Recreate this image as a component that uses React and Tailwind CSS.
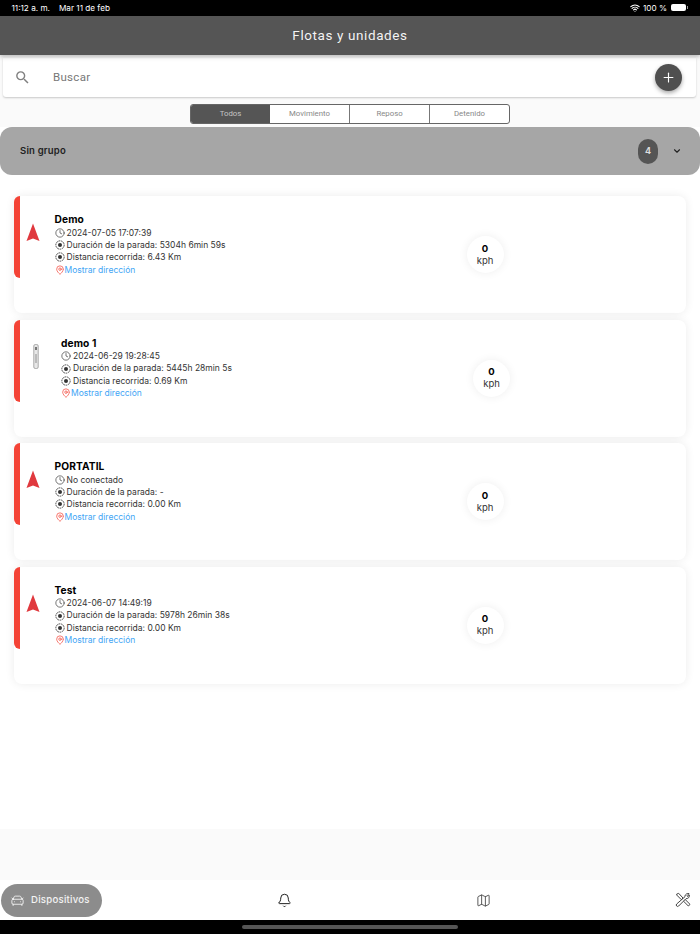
import { Plus, ChevronDown, Clock, MapPin, Bell, Map, CarFront, Wifi } from "lucide-react";

const units = [
    { name: 'Demo', date: '2024-07-05 17:07:39', stop: '5304h 6min 59s', dist: '6.43 Km' },
    { name: 'demo 1', date: '2024-06-29 19:28:45', stop: '5445h 28min 5s', dist: '0.69 Km', pen: true },
    { name: 'PORTATIL', date: 'No conectado', stop: '-', dist: '0.00 Km' },
    { name: 'Test', date: '2024-06-07 14:49:19', stop: '5978h 26min 38s', dist: '0.00 Km' },
]

function TargetIcon(){
    return (
        <svg width="10" height="10" viewBox="0 0 12 12" fill="none" className="shrink-0">
            <circle cx="6" cy="6" r="5" stroke="#333" strokeWidth="1" strokeDasharray="2.2 0.8"/>
            <circle cx="6" cy="6" r="2.4" fill="#333"/>
        </svg>
    )
}

function Arrow(){
    return (
        <svg width="14" height="19" viewBox="0 0 14 19">
            <path d="M7 0.5 L13.5 18 L7 15.5 L0.5 18 Z" fill="#e0393e"/>
        </svg>
    )
}

function Pen(){
    return (
        <svg width="6" height="25" viewBox="0 0 6 25">
            <rect x="0.8" y="0.5" width="4.4" height="24" rx="1.5" fill="#e8e8e8" stroke="#a0a0a0" strokeWidth="0.9"/>
            <rect x="2" y="3" width="2" height="3" fill="#777"/>
            <rect x="2" y="10" width="2" height="9" fill="#bbb"/>
        </svg>
    )
}

function UnitCard({ unit }){
    return (
        <div className="relative h-[117px] bg-white rounded-lg shadow-[0_0_10px_rgba(0,0,0,0.08)] flex">
            <div className="w-[6px] h-[82px] bg-[#f44336] rounded-l-lg shrink-0"/>
            <div className={unit.pen ? 'w-[41px] shrink-0 pl-[13px] pt-[24px]' : 'w-[34.5px] shrink-0 pl-[5.5px] pt-[27px]'}>
                {unit.pen ? <Pen/> : <Arrow/>}
            </div>
            <div className="w-[412px] shrink-0 pt-[17px]">
                <div className="text-[10.2px] leading-[13px] font-bold text-black h-[13px] tracking-[0.1px]">{unit.name}</div>
                <div className="text-[8.5px] leading-[12.4px] text-[#333] mt-[0.5px]">
                    <div className="flex items-center gap-[2px] h-[12.4px]"><Clock size={10} strokeWidth={1.6}/>{unit.date}</div>
                    <div className="flex items-center gap-[2px] h-[12.4px]"><TargetIcon/>Duración de la parada: {unit.stop}</div>
                    <div className="flex items-center gap-[2px] h-[12.4px]"><TargetIcon/>Distancia recorrida: {unit.dist}</div>
                    <div className="flex items-center h-[12.4px] text-[#42a5f5]">
                        <MapPin size={10} strokeWidth={1.7} className="text-[#f44336]"/>Mostrar dirección
                    </div>
                </div>
            </div>
            <div className="mt-[40px] w-[37px] h-[37px] rounded-full bg-white shadow-[0_0_10px_rgba(0,0,0,0.07)] flex flex-col items-center justify-center text-[9.5px] leading-[12px]">
                <span className="font-bold text-black">0</span>
                <span className="text-[#333]">kph</span>
            </div>
        </div>
    )
}

export default function App(){
    return (
        <div className="w-[700px] h-[934px] bg-white flex flex-col overflow-hidden font-['Inter',sans-serif]">
            {/* status bar */}
            <div className="h-[16px] bg-black text-white text-[8.2px] flex items-center justify-between pl-[11.5px] pr-[12px] shrink-0">
                <div className="flex gap-[9px]"><span>11:12 a. m.</span><span>Mar 11 de feb</span></div>
                <div className="flex items-center gap-[3px]">
                    <Wifi size={10} strokeWidth={2.6}/>
                    <span className="mr-[1px]">100 %</span>
                    <div className="w-[15px] h-[7px] bg-white rounded-[2px]"/>
                    <div className="w-[1px] h-[3px] bg-white/60 -ml-[2px]"/>
                </div>
            </div>

            {/* header */}
            <div className="h-[39px] bg-[#555555] shrink-0 flex items-center justify-center text-white/95 text-[13.5px] tracking-[0.6px] font-['Roboto',sans-serif] shadow-[0_2px_4px_rgba(0,0,0,0.25)] z-10">
                Flotas y unidades
            </div>

            <div className="bg-[#fafafa] h-[72px] shrink-0 flex flex-col">
                {/* search */}
                <div className="ml-[3px] mr-[4px] mt-[3px] h-[39px] bg-white rounded-b-[3px] shadow-[0_1px_2px_rgba(0,0,0,0.2)] flex items-center pl-[11px] pr-[14px] shrink-0">
                    <svg width="17" height="17" viewBox="0 0 24 24" fill="#808080">
                        <path d="M15.5 14h-.79l-.28-.27A6.471 6.471 0 0 0 16 9.5 6.5 6.5 0 1 0 9.5 16c1.61 0 3.09-.59 4.23-1.57l.27.28v.79l5 4.99L20.49 19l-4.99-5zm-6 0C7.01 14 5 11.99 5 9.5S7.01 5 9.5 5 14 7.01 14 9.5 11.99 14 9.5 14z"/>
                    </svg>
                    <span className="ml-[22px] text-[11.5px] text-[#777] font-['Roboto',sans-serif] tracking-[0.3px] flex-1">Buscar</span>
                    <div className="w-[27px] h-[27px] rounded-full bg-[#4f4f4f] shadow-[0_2px_4px_rgba(0,0,0,0.35)] flex items-center justify-center">
                        <Plus size={15} strokeWidth={1.8} className="text-white"/>
                    </div>
                </div>
                {/* segmented */}
                <div className="mx-auto mt-[7px] w-[320px] h-[20px] flex border border-[#666] rounded-[3px] text-[7.8px] font-normal text-[#888] font-['Roboto',sans-serif] bg-white overflow-hidden shrink-0">
                    <div className="flex-1 flex items-center justify-center bg-[#555555] text-[#c4c4c4]">Todos</div>
                    <div className="flex-1 flex items-center justify-center border-r border-[#777]">Movimiento</div>
                    <div className="flex-1 flex items-center justify-center border-r border-[#777]">Reposo</div>
                    <div className="flex-1 flex items-center justify-center">Detenido</div>
                </div>
            </div>

            {/* group header */}
            <div className="h-[48px] bg-[#a6a6a6] rounded-[12px] flex items-center pl-[20px] pr-[18px] shrink-0">
                <span className="flex-1 text-[9.5px] font-semibold text-[#222] tracking-[0.2px]">Sin grupo</span>
                <div className="w-[20px] h-[25px] rounded-full bg-[#555555] text-[#ddd] text-[9px] font-bold flex items-center justify-center">4</div>
                <ChevronDown size={10} strokeWidth={2.6} className="ml-[14px] text-[#222]"/>
            </div>

            {/* list */}
            <div className="h-[654px] shrink-0 bg-white pt-[21px] px-[14px] flex flex-col gap-[6.5px]">
                {units.map(u => <UnitCard key={u.name} unit={u}/>)}
            </div>

            <div className="h-[51px] bg-[#fafafa] shrink-0"/>

            {/* tab bar */}
            <div className="h-[40px] bg-white shrink-0 flex items-center pl-[1px] pr-[9px]">
                <div className="w-[101px] h-[33px] rounded-full bg-[#8c8c8c] flex items-center pl-[9px] text-white/90 text-[9.6px] font-medium tracking-[0.25px]">
                    <CarFront size={15} strokeWidth={1.4}/>
                    <span className="ml-[6px]">Dispositivos</span>
                </div>
                <Bell size={15} strokeWidth={1.6} className="ml-[175px] text-[#222]"/>
                <Map size={15} strokeWidth={1.4} className="ml-[184px] text-[#444]"/>
                <svg width="16" height="16" viewBox="0 0 24 24" fill="none" stroke="#444" strokeWidth="1.5" strokeLinejoin="round" strokeLinecap="round" className="ml-[184px]">
                    <path d="M3 3 L5.5 2 L12 9 L9.5 11.5 L3 5 Z"/>
                    <path d="M13 14 L19.5 20.5 a2 2 0 0 0 2.5 -2.5 L15.5 11.5"/>
                    <path d="M15 5.5 a4.5 4.5 0 0 1 6 -3 L18 5.5 L19 7 L21.5 4.5 a4.5 4.5 0 0 1 -5 5.5 L5.5 21 a2 2 0 0 1 -3 -3 L14.5 7.5 Z"/>
                </svg>
            </div>

            {/* home indicator */}
            <div className="h-[14px] bg-black shrink-0 flex items-center justify-center">
                <div className="w-[216px] h-[3.5px] rounded-full bg-[#555]"/>
            </div>
        </div>
    )
}
